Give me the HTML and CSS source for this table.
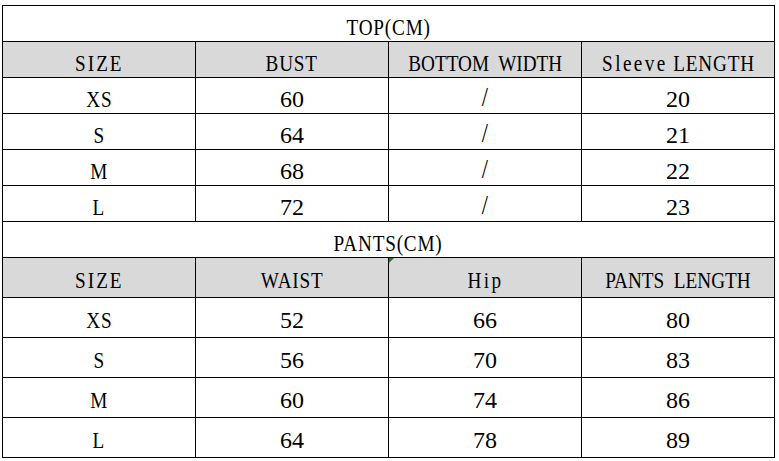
FILE: index.html
```html
<!DOCTYPE html>
<html>
<head>
<meta charset="utf-8">
<link rel="stylesheet" href="styles.css">
</head>
<body>
<div class="sheet">
  <div class="cell title"><span class="t">TOP(CM)</span></div>

  <div class="cell hd"><span class="t wide">SIZE</span></div>
  <div class="cell hd"><span class="t">BUST</span></div>
  <div class="cell hd"><span class="t tight">BOTTOM WIDTH</span></div>
  <div class="cell hd"><span class="t"><span class="lc">Sleeve</span> LENGTH</span></div>

  <div class="cell"><span class="t">XS</span></div>
  <div class="cell">60</div>
  <div class="cell"><span class="slash">/</span></div>
  <div class="cell">20</div>

  <div class="cell"><span class="t">S</span></div>
  <div class="cell">64</div>
  <div class="cell"><span class="slash">/</span></div>
  <div class="cell">21</div>

  <div class="cell"><span class="t">M</span></div>
  <div class="cell">68</div>
  <div class="cell"><span class="slash">/</span></div>
  <div class="cell">22</div>

  <div class="cell"><span class="t">L</span></div>
  <div class="cell">72</div>
  <div class="cell"><span class="slash">/</span></div>
  <div class="cell">23</div>

  <div class="cell title"><span class="t">PANTS(CM)</span></div>

  <div class="cell hd tall"><span class="t wide">SIZE</span></div>
  <div class="cell hd tall"><span class="t">WAIST</span></div>
  <div class="cell hd tall marked"><span class="t lc">Hip</span></div>
  <div class="cell hd tall"><span class="t tight">PANTS LENGTH</span></div>

  <div class="cell tall"><span class="t">XS</span></div>
  <div class="cell tall">52</div>
  <div class="cell tall">66</div>
  <div class="cell tall">80</div>

  <div class="cell tall"><span class="t">S</span></div>
  <div class="cell tall">56</div>
  <div class="cell tall">70</div>
  <div class="cell tall">83</div>

  <div class="cell tall"><span class="t">M</span></div>
  <div class="cell tall">60</div>
  <div class="cell tall">74</div>
  <div class="cell tall">86</div>

  <div class="cell tall"><span class="t">L</span></div>
  <div class="cell tall">64</div>
  <div class="cell tall">78</div>
  <div class="cell tall">89</div>
</div>
</body>
</html>
```

FILE: styles.css
```css
html, body {
  margin: 0;
  padding: 0;
  background: #ffffff;
}

body {
  font-family: "Liberation Serif", "Times New Roman", serif;
  color: #000000;
}

.sheet {
  display: grid;
  grid-template-columns: repeat(4, 192px);
  grid-template-rows: repeat(7, 35px) repeat(5, 39px);
  gap: 1px;
  padding: 1px;
  background: #000000;
  width: max-content;
  margin: 5px 0 0 2px;
}

.cell {
  background: #ffffff;
  display: flex;
  justify-content: center;
  align-items: center;
  padding-top: 6px;
  box-sizing: border-box;
  font-size: 24px;
  line-height: 24px;
  white-space: nowrap;
}

.cell.tall {
  padding-top: 5px;
}

.title {
  grid-column: 1 / -1;
}

.hd {
  background: #d9d9d9;
}

.t {
  display: inline-block;
  transform: scaleX(0.8);
  letter-spacing: 1px;
}

.t.wide {
  letter-spacing: 2.5px;
}

.t.tight {
  letter-spacing: 0;
  word-spacing: 6px;
}

.lc {
  letter-spacing: 3px;
}

.slash {
  display: inline-block;
  font-size: 28px;
  transform: translateY(-2px) scaleX(0.8);
}

.marked {
  position: relative;
}

.marked::before {
  content: "";
  position: absolute;
  top: 0;
  left: 0;
  border-top: 5px solid #1e7b1e;
  border-right: 5px solid transparent;
}
```
